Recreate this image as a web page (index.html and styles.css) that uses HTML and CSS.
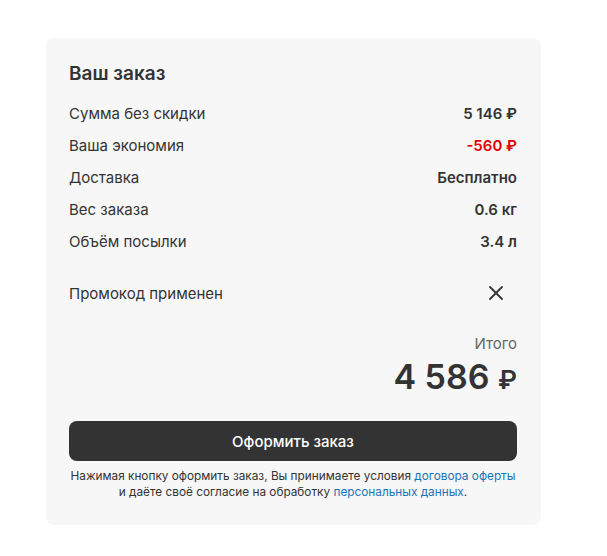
FILE: index.html
```html
<!DOCTYPE html>
<html lang="ru">
<head>
    <meta charset="UTF-8">
    <meta name="viewport" content="width=device-width, initial-scale=1.0">
    <title>Ваш заказ</title>
    <link rel="stylesheet" href="styles.css">
</head>
<body>
    <div class="order-summary">
        <h2 class="summary-title">Ваш заказ</h2>

        <div class="summary-rows">
            <div class="summary-row">
                <span>Сумма без скидки</span>
                <span class="value">5 146 ₽</span>
            </div>
            <div class="summary-row">
                <span>Ваша экономия</span>
                <span class="value discount">-560 ₽</span>
            </div>
            <div class="summary-row">
                <span>Доставка</span>
                <span class="value">Бесплатно</span>
            </div>
            <div class="summary-row">
                <span>Вес заказа</span>
                <span class="value">0.6 кг</span>
            </div>
            <div class="summary-row">
                <span>Объём посылки</span>
                <span class="value">3.4 л</span>
            </div>
        </div>

        <div class="promo-row">
            <span>Промокод применен</span>
            <button class="promo-remove" aria-label="Удалить промокод">
                <svg width="16" height="16" viewBox="0 0 16 16">
                    <path d="M2 2 L14 14 M14 2 L2 14" stroke="#333" stroke-width="1.8" stroke-linecap="round" fill="none"/>
                </svg>
            </button>
        </div>

        <div class="total">
            <div class="total-label">Итого</div>
            <div class="total-sum">4 586 <span class="currency">₽</span></div>
        </div>

        <button class="checkout-button">Оформить заказ</button>

        <p class="terms">
            Нажимая кнопку оформить заказ, Вы принимаете условия <a href="#">договора оферты</a><br>
            и даёте своё согласие на обработку <a href="#">персональных данных</a>.
        </p>
    </div>
</body>
</html>
```

FILE: styles.css
```css
body {
    font-family: Inter, "Noto Sans", sans-serif;
    margin: 0;
    padding: 0;
    background-color: #fff;
    color: #333;
}

.order-summary {
    width: 448px;
    margin: 38px 0 0 46px;
    padding: 24px 24px 25px 23px;
    background: #f7f7f7;
    border-radius: 8px;
}

.summary-title {
    margin: 0 0 11px;
    font-size: 19px;
    line-height: 24px;
    font-weight: 600;
}

.summary-row, .promo-row {
    display: flex;
    justify-content: space-between;
    align-items: center;
    height: 32px;
    font-size: 15px;
}

.value {
    font-weight: 600;
}

.discount {
    color: #e30000;
}

.promo-row {
    margin-top: 20px;
}

.promo-remove {
    display: flex;
    align-items: center;
    justify-content: center;
    width: 24px;
    height: 24px;
    margin-right: 9px;
    padding: 0;
    border: none;
    background: none;
    cursor: pointer;
}

.total {
    margin-top: 25px;
    text-align: right;
}

.total-label {
    font-size: 15px;
    line-height: 20px;
    color: #666;
}

.total-sum {
    margin-top: 3px;
    font-size: 34px;
    line-height: 40px;
    font-weight: 600;
}

.currency {
    font-size: 26px;
    line-height: 1;
}

.checkout-button {
    display: block;
    width: 100%;
    height: 40px;
    margin-top: 24px;
    border: none;
    border-radius: 8px;
    background-color: #333;
    color: #fff;
    font-family: inherit;
    font-size: 15px;
    font-weight: 500;
    cursor: pointer;
}

.terms {
    margin: 7px -6px 0;
    font-size: 11.8px;
    line-height: 16px;
    text-align: center;
    white-space: nowrap;
}

.terms a {
    color: #1a73b8;
    text-decoration: none;
}
```
